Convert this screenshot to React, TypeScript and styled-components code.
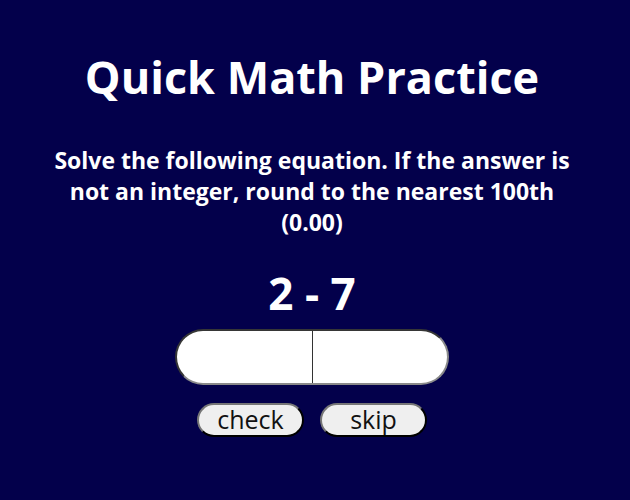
import React, { useState } from 'react';
import styled, { createGlobalStyle } from 'styled-components';

const GlobalStyle = createGlobalStyle`
  html, body {
    margin: 0;
    padding: 0;
    background: #03004b;
  }
  body {
    font-family: 'Open Sans', 'Noto Sans', sans-serif;
  }
`;

const Page = styled.main`
  width: 624px;
  height: 500px;
  box-sizing: border-box;
  padding-top: 49px;
  display: flex;
  flex-direction: column;
  align-items: center;
  color: #fff;
`;

const Title = styled.h1`
  margin: 0;
  font-size: 45px;
  font-weight: 700;
  line-height: 56px;
`;

const Prompt = styled.p`
  margin: 40px 0 0;
  width: 530px;
  text-align: center;
  font-size: 23px;
  font-weight: 700;
  line-height: 31px;
`;

const Problem = styled.div`
  margin-top: 30px;
  font-size: 44px;
  font-weight: 700;
  line-height: 50px;
`;

const Field = styled.div`
  position: relative;
  margin-top: 11px;
  width: 274px;
  height: 56px;
`;

const Answer = styled.input`
  width: 100%;
  height: 100%;
  box-sizing: border-box;
  border: 2px inset #8a8a8a;
  border-radius: 28px;
  background: #fff;
  text-align: center;
  font-family: 'Open Sans', sans-serif;
  font-size: 36px;
  outline: none;
  caret-color: #333;
`;

const Caret = styled.span`
  position: absolute;
  left: 137px;
  top: 2px;
  bottom: 2px;
  width: 1px;
  background: #333;
  pointer-events: none;
`;

const Actions = styled.div`
  margin-top: 18px;
  display: flex;
  gap: 16px;
`;

const Action = styled.button`
  width: 107px;
  height: 34px;
  box-sizing: border-box;
  border: 2px outset #222;
  border-radius: 17px;
  background: #efefef;
  color: #111;
  font-family: 'Open Sans', sans-serif;
  font-size: 25px;
  line-height: 1;
  padding: 0 0 1px;
  cursor: pointer;
`;

export default function App() {
  const [value, setValue] = useState('');
  return (
    <>
      <GlobalStyle />
      <Page>
        <Title>Quick Math Practice</Title>
        <Prompt>
          Solve the following equation. If the answer is not an integer, round to the nearest 100th (0.00)
        </Prompt>
        <Problem>2 - 7</Problem>
        <Field>
          <Answer value={value} onChange={(e) => setValue(e.target.value)} />
          {value === '' && <Caret />}
        </Field>
        <Actions>
          <Action>check</Action>
          <Action>skip</Action>
        </Actions>
      </Page>
    </>
  );
}
